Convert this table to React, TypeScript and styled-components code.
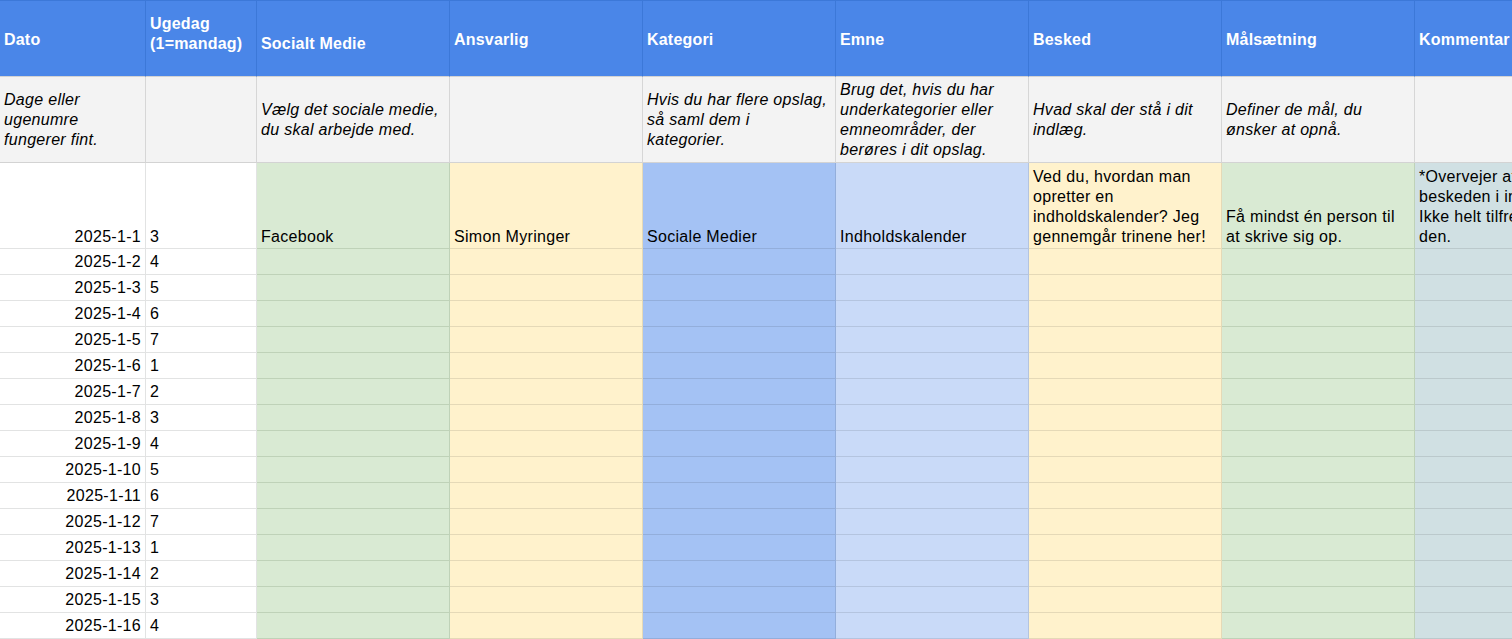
import React from 'react'
import styled, { createGlobalStyle } from 'styled-components'

const GlobalStyle = createGlobalStyle`
  html, body {
    margin: 0;
    padding: 0;
    background: #ffffff;
    overflow: hidden;
  }
  body {
    font-family: 'Liberation Sans', Arial, sans-serif;
    color: #000000;
  }
`

type Fill = 'white' | 'green' | 'yellow' | 'blue' | 'lightBlue' | 'cyan'

const fills: Record<Fill, { bg: string; line: string }> = {
  white: { bg: '#ffffff', line: '#e2e3e3' },
  green: { bg: '#d9ead3', line: '#bfd2b8' },
  yellow: { bg: '#fff2cc', line: '#e5d9b7' },
  blue: { bg: '#a4c2f4', line: '#93aedb' },
  lightBlue: { bg: '#c9daf8', line: '#b4c4df' },
  cyan: { bg: '#d0e0e3', line: '#bbc9cc' },
}

const Viewport = styled.div`
  width: 1512px;
  height: 639px;
  overflow: hidden;
`

const Sheet = styled.div`
  display: grid;
  grid-template-columns: 146px 111px repeat(7, 193px);
  grid-template-rows: 77px 86px 86px;
  grid-auto-rows: 26px;
  width: max-content;
  font-size: 16px;
  line-height: 20px;
  letter-spacing: 0.3px;
`

const HeaderCell = styled.div<{ $top: number }>`
  box-sizing: border-box;
  padding: ${({ $top }) => $top}px 4px 0 4px;
  background: #4a86e8;
  color: #ffffff;
  font-weight: 700;
  letter-spacing: 0.2px;
  border-top: 1px solid #3c78d8;
  border-right: 1px solid #3c78d8;
  border-bottom: 1px solid #d3d3d3;
  white-space: nowrap;
  overflow: hidden;
`

const HintCell = styled.div`
  box-sizing: border-box;
  display: flex;
  align-items: center;
  padding: 0 4px;
  background: #f3f3f3;
  font-style: italic;
  border-right: 1px solid #d6d6d6;
  border-bottom: 1px solid #d3d3d3;
  white-space: nowrap;
  overflow: hidden;
`

const DataCell = styled.div<{ $fill: Fill; $tall?: boolean; $right?: boolean }>`
  box-sizing: border-box;
  display: flex;
  flex-direction: column;
  justify-content: ${({ $tall }) => ($tall ? 'flex-end' : 'center')};
  align-items: ${({ $right }) => ($right ? 'flex-end' : 'flex-start')};
  padding: ${({ $tall }) => ($tall ? '0 4px 1px 4px' : '0 4px')};
  background: ${({ $fill }) => fills[$fill].bg};
  border-right: 1px solid ${({ $fill }) => fills[$fill].line};
  border-bottom: 1px solid ${({ $fill }) => fills[$fill].line};
  white-space: nowrap;
  overflow: hidden;
`

const Lines: React.FC<{ text: string[] }> = ({ text }) => (
  <div>
    {text.map((line, i) => (
      <div key={i}>{line}</div>
    ))}
  </div>
)

const headers: { title: string[]; top: number }[] = [
  { title: ['Dato'], top: 29 },
  { title: ['Ugedag', '(1=mandag)'], top: 13 },
  { title: ['Socialt Medie'], top: 33 },
  { title: ['Ansvarlig'], top: 29 },
  { title: ['Kategori'], top: 29 },
  { title: ['Emne'], top: 29 },
  { title: ['Besked'], top: 29 },
  { title: ['Målsætning'], top: 29 },
  { title: ['Kommentar'], top: 29 },
]

const hints: string[][] = [
  ['Dage eller', 'ugenumre', 'fungerer fint.'],
  [],
  ['Vælg det sociale medie,', 'du skal arbejde med.'],
  [],
  ['Hvis du har flere opslag,', 'så saml dem i', 'kategorier.'],
  ['Brug det, hvis du har', 'underkategorier eller', 'emneområder, der', 'berøres i dit opslag.'],
  ['Hvad skal der stå i dit', 'indlæg.'],
  ['Definer de mål, du', 'ønsker at opnå.'],
  [],
]

const columnFills: Fill[] = ['white', 'white', 'green', 'yellow', 'blue', 'lightBlue', 'yellow', 'green', 'cyan']

const firstEntry: string[][] = [
  ['2025-1-1'],
  ['3'],
  ['Facebook'],
  ['Simon Myringer'],
  ['Sociale Medier'],
  ['Indholdskalender'],
  ['Ved du, hvordan man', 'opretter en', 'indholdskalender? Jeg', 'gennemgår trinene her!'],
  ['Få mindst én person til', 'at skrive sig op.'],
  ['*Overvejer at ændre', 'beskeden i indlægget.', 'Ikke helt tilfreds med', 'den.'],
]

const laterDays = Array.from({ length: 15 }, (_, i) => ({
  date: `2025-1-${i + 2}`,
  weekday: ((i + 3) % 7) + 1,
}))

const App: React.FC = () => {
  return (
    <Viewport>
      <GlobalStyle />
      <Sheet>
        {headers.map((h) => (
          <HeaderCell key={h.title.join('')} $top={h.top}>
            <Lines text={h.title} />
          </HeaderCell>
        ))}

        {hints.map((hint, i) => (
          <HintCell key={`hint-${i}`}>
            <Lines text={hint} />
          </HintCell>
        ))}

        {firstEntry.map((value, i) => (
          <DataCell key={`first-${i}`} $fill={columnFills[i]} $tall $right={i === 0}>
            <Lines text={value} />
          </DataCell>
        ))}

        {laterDays.map((day) =>
          columnFills.map((fill, col) => (
            <DataCell key={`${day.date}-${col}`} $fill={fill} $right={col === 0}>
              {col === 0 ? day.date : col === 1 ? day.weekday : ''}
            </DataCell>
          ))
        )}
      </Sheet>
    </Viewport>
  )
}

export default App
